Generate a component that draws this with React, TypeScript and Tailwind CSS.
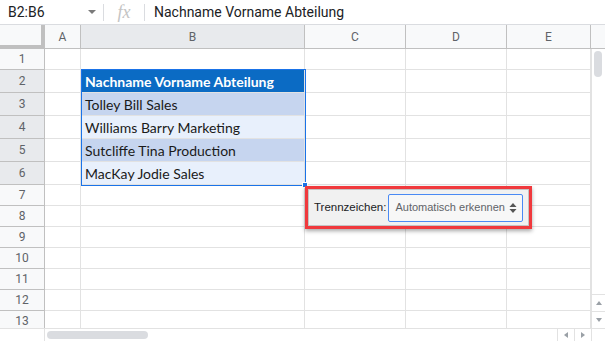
import React from 'react';

const COLS = [
  { key: 'A', w: 'w-[36px]' },
  { key: 'B', w: 'w-[224px]' },
  { key: 'C', w: 'w-[101px]' },
  { key: 'D', w: 'w-[101px]' },
  { key: 'E', w: 'w-[84px]' },
];

// B column contents for rows 2..6
const DATA: Record<number, { text: string; cls: string }> = {
  2: { text: 'Nachname Vorname Abteilung', cls: 'bg-[#0b6bc4] text-white font-bold' },
  3: { text: 'Tolley Bill Sales', cls: 'bg-[#c6d5ef] text-[#1a1a1a]' },
  4: { text: 'Williams Barry Marketing', cls: 'bg-[#e8f0fc] text-[#1a1a1a]' },
  5: { text: 'Sutcliffe Tina Production', cls: 'bg-[#c6d5ef] text-[#1a1a1a]' },
  6: { text: 'MacKay Jodie Sales', cls: 'bg-[#e8f0fc] text-[#1a1a1a]' },
};

const ROWS = [1, 2, 3, 4, 5, 6, 7, 8, 9, 10, 11, 12, 13];

function rowHeight(r: number) {
  return r >= 2 && r <= 6 ? 'h-[23px]' : 'h-[21px]';
}

export default function App() {
  return (
    <div className="relative w-[605px] h-[341px] overflow-hidden bg-white font-['Roboto','Liberation_Sans',sans-serif] text-[#202124]">
      {/* formula bar */}
      <div className="flex items-center h-[25px] border-b border-[#dadce0] text-[14px]">
        <div className="flex items-center w-[103px] pl-[8px] pr-[6px] h-full">
          <span className="flex-1">B2:B6</span>
          <svg width="8" height="5" viewBox="0 0 8 5" className="mr-[1px]">
            <path d="M0 0h8L4 4z" fill="#7a7a7a" />
          </svg>
        </div>
        <div className="w-px h-[17px] bg-[#dadce0]" />
        <div className="w-[40px] flex justify-center text-[#c4c4c4] italic font-['Liberation_Serif',serif] text-[18px] leading-none">fx</div>
        <div className="w-px h-[17px] bg-[#dadce0]" />
        <div className="pl-[9px]">Nachname Vorname Abteilung</div>
      </div>

      <div className="flex">
        <div className="flex flex-col">
          {/* column headers */}
          <div className="flex h-[24px] text-[12px] text-[#5f6368]">
            <div className="w-[45px] h-full bg-[#f8f9fa] border-r-4 border-b-4 border-[#c0c0c0]" />
            {COLS.map((c) => (
              <div
                key={c.key}
                className={`${c.w} h-full flex items-center justify-center border-r border-b border-[#c0c0c0] ${
                  c.key === 'B' ? 'bg-[#e8eaed]' : 'bg-[#f8f9fa]'
                }`}
              >
                {c.key}
              </div>
            ))}
          </div>
          {/* rows */}
          <div className="h-[279px] overflow-hidden">
            {ROWS.map((r) => (
              <div key={r} className={`flex ${rowHeight(r)}`}>
                <div
                  className={`w-[45px] h-full flex items-center justify-center text-[12px] text-[#5f6368] border-r border-b border-[#c0c0c0] ${
                    r >= 2 && r <= 6 ? 'bg-[#e8eaed]' : 'bg-[#f8f9fa]'
                  }`}
                >
                  {r}
                </div>
                {COLS.map((c) => {
                  const d = c.key === 'B' ? DATA[r] : undefined;
                  return (
                    <div
                      key={c.key}
                      className={`${c.w} h-full border-r border-b border-[#e2e2e2] ${d ? d.cls : ''} flex items-center pl-[4px] text-[14px] font-['Lato','Open_Sans',sans-serif] whitespace-nowrap`}
                    >
                      {d ? d.text : null}
                    </div>
                  );
                })}
              </div>
            ))}
          </div>
        </div>

        {/* vertical scrollbar */}
        <div className="flex flex-col w-[14px]">
          <div className="h-[24px] bg-[#f8f9fa] border-b border-[#c0c0c0]" />
          <div className="flex-1 border-l border-[#e2e2e2] relative">
            <div className="absolute left-[2px] top-[2px] w-[8px] h-[26px] rounded-full bg-[#dadce0]" />
          </div>
          <div className="h-[17px] border-l border-t border-[#e2e2e2] flex items-center justify-center">
            <svg width="6" height="4" viewBox="0 0 6 4"><path d="M0 4L3 0 6 4z" fill="#9aa0a6" /></svg>
          </div>
          <div className="h-[17px] border-l border-t border-[#e2e2e2] flex items-center justify-center">
            <svg width="6" height="4" viewBox="0 0 6 4"><path d="M0 0h6L3 4z" fill="#9aa0a6" /></svg>
          </div>
        </div>
      </div>

      {/* horizontal scrollbar */}
      <div className="flex h-[13px] border-t border-[#e2e2e2]">
        <div className="w-[45px] h-full border-r border-[#e2e2e2]" />
        <div className="flex-1 relative">
          <div className="absolute left-[2px] top-[2px] w-[101px] h-[8px] rounded-full bg-[#dadce0]" />
        </div>
        <div className="w-[17px] border-l border-[#e2e2e2] flex items-center justify-center">
          <svg width="4" height="6" viewBox="0 0 4 6"><path d="M4 0v6L0 3z" fill="#9aa0a6" /></svg>
        </div>
        <div className="w-[17px] border-l border-[#e2e2e2] flex items-center justify-center">
          <svg width="4" height="6" viewBox="0 0 4 6"><path d="M0 0v6L4 3z" fill="#9aa0a6" /></svg>
        </div>
        <div className="w-[14px] border-l border-[#e2e2e2]" />
      </div>

      {/* selection outline over B2:B6 */}
      <div className="absolute left-[81px] top-[69px] w-[225px] h-[117px] border border-[#1a73e8] pointer-events-none" />
      <div className="absolute left-[302px] top-[182px] w-[6px] h-[6px] bg-[#1a73e8] border border-white" />

      {/* separator popup with red highlight */}
      <div className="absolute left-[305px] top-[186px] w-[227px] h-[43px] border-[3px] border-[#f0393d] shadow-[0_2px_4px_rgba(0,0,0,0.35)]">
        <div className="w-full h-full bg-[#f1f1f1] border border-[#c4c4c4] flex items-center pl-[5px] gap-[2px] font-['Liberation_Sans',sans-serif] whitespace-nowrap">
          <span className="shrink-0 text-[11.5px] text-[#202124]">Trennzeichen:</span>
          <div className="shrink-0 w-[135px] h-[28px] bg-[#f7f7f7] border border-[#4a8af4] rounded-[2px] flex items-center pl-[6px] pr-[5px] text-[11px] text-[#5f6368]">
            <span className="flex-1">Automatisch erkennen</span>
            <svg width="8" height="12" viewBox="0 0 9 13" className="shrink-0">
              <path d="M0.5 5.5L4.5 1 8.5 5.5z M0.5 7.5h8L4.5 12z" fill="#555" />
            </svg>
          </div>
        </div>
      </div>
    </div>
  );
}
